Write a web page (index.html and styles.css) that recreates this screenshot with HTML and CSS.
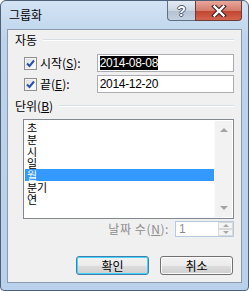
FILE: index.html
```html
<!DOCTYPE html>
<html>

<head>
  <title>그룹화</title>
  <link rel="stylesheet" href="styles.css">
</head>

<body>
  <div class="window">
    <div class="titlebar">
      <span class="title">그룹화</span>
      <div class="caption-btns">
        <div class="cap help">?</div>
        <div class="cap close">
          <svg width="16" height="12" viewBox="0 0 16 12">
            <path d="M3.5 1.5 L12.5 10.5 M12.5 1.5 L3.5 10.5" stroke="#3b2420" stroke-width="4.5" stroke-linecap="square" />
            <path d="M3.5 1.5 L12.5 10.5 M12.5 1.5 L3.5 10.5" stroke="#ffffff" stroke-width="2.4" stroke-linecap="square" />
          </svg>
        </div>
      </div>
    </div>

    <div class="client">
      <div class="group-head first">
        <span>자동</span>
        <div class="etch"></div>
      </div>

      <div class="date-row">
        <span class="check">
          <svg width="9" height="9" viewBox="0 0 9 9">
            <path d="M1 4.5 L3.5 7 L8 1.5" stroke="#2b4fae" stroke-width="2" fill="none" />
          </svg>
        </span>
        <label class="date-label">시작(<u>S</u>):</label>
        <div class="textbox"><span class="sel">2014-08-08</span></div>
      </div>

      <div class="date-row second">
        <span class="check">
          <svg width="9" height="9" viewBox="0 0 9 9">
            <path d="M1 4.5 L3.5 7 L8 1.5" stroke="#2b4fae" stroke-width="2" fill="none" />
          </svg>
        </span>
        <label class="date-label">끝(<u>E</u>):</label>
        <div class="textbox">2014-12-20</div>
      </div>

      <div class="group-head">
        <span>단위(<u>B</u>)</span>
        <div class="etch"></div>
      </div>

      <div class="listbox">
        <ul class="items">
          <li>초</li>
          <li>분</li>
          <li>시</li>
          <li>일</li>
          <li class="selected">월</li>
          <li>분기</li>
          <li>연</li>
        </ul>
        <div class="scrollbar">
          <span class="arrow up"></span>
          <span class="arrow down"></span>
        </div>
      </div>

      <div class="days-row">
        <label class="days-label">날짜 수(<u>N</u>):</label>
        <div class="spin">
          <span class="spin-value">1</span>
          <div class="spin-btns">
            <span class="spin-btn"><span class="tri up"></span></span>
            <span class="spin-btn"><span class="tri down"></span></span>
          </div>
        </div>
      </div>

      <div class="buttons">
        <div class="btn default">확인</div>
        <div class="btn">취소</div>
      </div>
    </div>
  </div>
</body>

</html>
```

FILE: styles.css
```css
body {
  margin: 0;
  width: 249px;
  height: 291px;
  overflow: hidden;
  font-family: "Noto Sans CJK KR", "Noto Sans", sans-serif;
  font-size: 12px;
  color: #000;
}

.window {
  box-sizing: border-box;
  width: 249px;
  height: 291px;
  border: 1px solid #4f6179;
  border-radius: 6px 6px 4px 4px;
  background: linear-gradient(#d3e3f4, #bcd3eb 40px, #b9d1ea);
  display: flex;
  flex-direction: column;
}

.titlebar {
  height: 28px;
  display: flex;
  align-items: flex-start;
}

.title {
  margin: 7px 0 0 8px;
  line-height: 14px;
}

.caption-btns {
  margin-left: auto;
  margin-right: 6px;
  display: flex;
}

.cap {
  box-sizing: border-box;
  height: 20px;
  border: 1px solid #5f6f86;
  border-top: none;
  display: flex;
  align-items: center;
  justify-content: center;
}

.help {
  width: 28px;
  border-radius: 0 0 0 4px;
  border-right: none;
  background: linear-gradient(#e6ebf2, #cbd5e2 50%, #b3c1d3 51%, #c5d1e0);
  color: #fff;
  font-family: "Liberation Sans", sans-serif;
  font-weight: bold;
  font-size: 14px;
  text-shadow: 1px 0 #4a5568, -1px 0 #4a5568, 0 1px #4a5568, 0 -1px #4a5568;
}

.close {
  width: 47px;
  border-radius: 0 0 4px 0;
  border-color: #6e3b33;
  background: linear-gradient(#e8a79b, #d47c6c 50%, #c2432f 51%, #d2654f);
}

.client {
  box-sizing: border-box;
  margin: 0 6px 0 6px;
  height: 254px;
  border: 1px solid #8d9aab;
  background: #f0f0f0;
  padding: 0 7px;
}

.group-head {
  height: 14px;
  margin-top: 6px;
  display: flex;
  align-items: center;
  line-height: 14px;
}

.group-head.first {
  margin-top: 3px;
}

.etch {
  flex: 1;
  margin-left: 6px;
  border-top: 1px solid #d5dfe5;
  border-bottom: 1px solid #ffffff;
}

.date-row {
  margin-top: 7px;
  height: 18px;
  display: flex;
  align-items: center;
  padding-left: 9px;
}

.date-row.second {
  margin-top: 3px;
}

.check {
  box-sizing: border-box;
  width: 13px;
  height: 13px;
  border: 1px solid #8e8f8f;
  background: linear-gradient(135deg, #dcdcdc, #ffffff);
  box-shadow: inset 0 0 0 1px #f4f4f4;
  display: flex;
  align-items: center;
  justify-content: center;
}

.date-label {
  width: 57px;
  margin-left: 3px;
  line-height: 14px;
}

.textbox {
  box-sizing: border-box;
  width: 138px;
  height: 18px;
  border: 1px solid #abadb3;
  background: #fff;
  padding-left: 2px;
  font-family: "Liberation Sans", sans-serif;
  font-size: 12px;
  letter-spacing: -0.3px;
  line-height: 16px;
}

.sel {
  background: #000;
  color: #fff;
}

.listbox {
  box-sizing: border-box;
  margin: 6px 0 0 8px;
  height: 100px;
  border: 1px solid #828790;
  background: #fff;
  padding: 1px;
  display: flex;
}

.items {
  flex: 1;
  list-style: none;
  margin: 0;
  padding: 0;
}

.items li {
  height: 12px;
  font-size: 11px;
  line-height: 12px;
  padding-left: 2px;
}

.items li.selected {
  background: #3399ff;
  color: #fff;
}

.scrollbar {
  width: 17px;
  background: #f2f2f2;
  border-left: 1px solid #fbfbfb;
  display: flex;
  flex-direction: column;
  justify-content: space-between;
  align-items: center;
  padding: 7px 0;
}

.arrow {
  width: 0;
  height: 0;
  border-left: 4px solid transparent;
  border-right: 4px solid transparent;
}

.arrow.up {
  border-bottom: 4px solid #a3a3a3;
}

.arrow.down {
  border-top: 4px solid #a3a3a3;
}

.days-row {
  margin-top: 2px;
  height: 16px;
  display: flex;
  justify-content: flex-end;
  align-items: center;
}

.days-label {
  color: #8d8d8d;
  line-height: 14px;
  letter-spacing: 0.6px;
  margin-right: 6px;
}

.spin {
  box-sizing: border-box;
  width: 59px;
  height: 16px;
  border: 1px solid #b8c9dd;
  background: #fff;
  display: flex;
}

.spin-value {
  flex: 1;
  padding-left: 3px;
  color: #8d8d8d;
  font-family: "Liberation Sans", sans-serif;
  line-height: 14px;
}

.spin-btns {
  width: 15px;
  display: flex;
  flex-direction: column;
}

.spin-btn {
  flex: 1;
  box-sizing: border-box;
  border: 1px solid #d9d9d9;
  background: #f4f4f4;
  display: flex;
  align-items: center;
  justify-content: center;
}

.tri {
  width: 0;
  height: 0;
  border-left: 3px solid transparent;
  border-right: 3px solid transparent;
}

.tri.up {
  border-bottom: 3px solid #a8a8a8;
}

.tri.down {
  border-top: 3px solid #a8a8a8;
}

.buttons {
  margin-top: 19px;
  margin-right: 1px;
  display: flex;
  justify-content: flex-end;
  gap: 11px;
}

.btn {
  box-sizing: border-box;
  width: 73px;
  height: 19px;
  border: 1px solid #707070;
  border-radius: 3px;
  background: linear-gradient(#f2f2f2, #ebebeb 50%, #dddddd 51%, #cfcfcf);
  box-shadow: inset 0 0 0 1px #fcfcfc;
  text-align: center;
  line-height: 17px;
}

.btn.default {
  border-color: #3c7fb1;
  box-shadow: inset 0 0 0 1px #48d4f7;
}
```
